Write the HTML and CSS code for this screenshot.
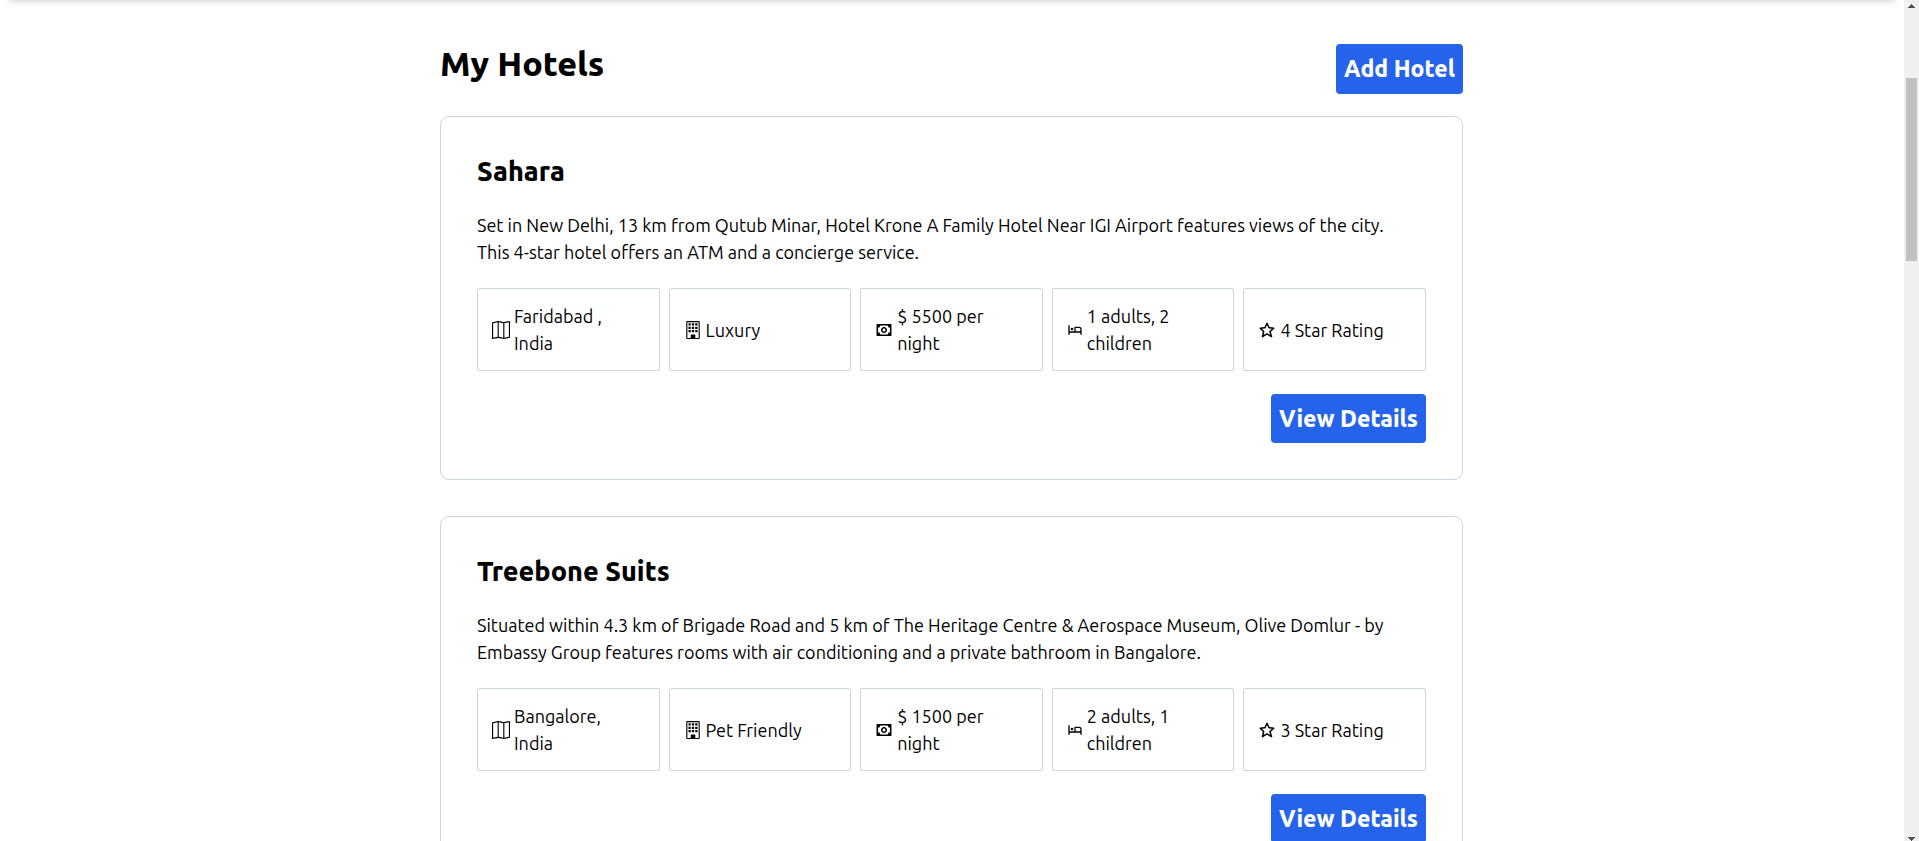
FILE: index.html
```html
<!DOCTYPE html>
<html lang="en">
<head>
<meta charset="utf-8">
<title>My Hotels</title>
<link rel="stylesheet" href="styles.css">
</head>
<body>
<svg class="sprite" aria-hidden="true">
  <symbol id="i-map" viewBox="0 0 16 16"><path fill-rule="evenodd" d="M15.817.113A.5.5 0 0 1 16 .5v14a.5.5 0 0 1-.402.49l-5 1a.502.502 0 0 1-.196 0L5.5 15.01l-4.902.98A.5.5 0 0 1 0 15.5v-14a.5.5 0 0 1 .402-.49l5-1a.5.5 0 0 1 .196 0L10.5.99l4.902-.98a.5.5 0 0 1 .415.103M10 1.91l-4-.8v12.98l4 .8zm1 12.98 4-.8V1.11l-4 .8zm-6-.8V1.11l-4 .8v12.98z"/></symbol>
  <symbol id="i-building" viewBox="0 0 16 16"><path d="M4 2h2v2H4zM7 2h2v2H7zM10 2h2v2h-2zM4 5h2v2H4zM7 5h2v2H7zM10 5h2v2h-2zM4 8h2v2H4zM7 8h2v2H7zM10 8h2v2h-2z"/><path d="M2 1a1 1 0 0 1 1-1h10a1 1 0 0 1 1 1v14a1 1 0 0 1-1 1H3a1 1 0 0 1-1-1zm11 0H3v14h3v-2.500a.5.5 0 0 1 .5-.5h3a.5.5 0 0 1 .5.5V15h3z"/></symbol>
  <symbol id="i-money" viewBox="0 0 24 24"><path d="M12 8c-2.206 0-4 1.794-4 4s1.794 4 4 4 4-1.794 4-4-1.794-4-4-4zm0 6c-1.103 0-2-.897-2-2s.897-2 2-2 2 .897 2 2-.897 2-2 2z"/><path d="M21 4H3a1 1 0 0 0-1 1v14a1 1 0 0 0 1 1h18a1 1 0 0 0 1-1V5a1 1 0 0 0-1-1zm-1 11a3 3 0 0 0-3 3H7a3 3 0 0 0-3-3V9a3 3 0 0 0 3-3h10a3 3 0 0 0 3 3v6z"/></symbol>
  <symbol id="i-hotel" viewBox="0 0 24 24"><path d="M18.205 7H12a1 1 0 0 0-1 1v6H4V5H2v14h2v-3h16v3h2v-8.205A3.800 3.800 0 0 0 18.205 7zM20 14h-7V9h5.205A1.797 1.797 0 0 1 20 10.795V14z"/><circle cx="7.500" cy="10.500" r="2"/></symbol>
  <symbol id="i-star" viewBox="0 0 24 24"><path d="m6.516 14.323-1.490 6.452a.998.998 0 0 0 1.529 1.057L12 18.202l5.445 3.630a1.001 1.001 0 0 0 1.517-1.106l-1.829-6.400 4.536-4.082a1 1 0 0 0-.59-1.740l-5.701-.454-2.467-5.461a.998.998 0 0 0-1.822 0L8.622 8.050l-5.701.453a1 1 0 0 0-.619 1.713l4.214 4.107zm2.853-4.326a.998.998 0 0 0 .832-.586L12 5.430l1.799 3.981a.998.998 0 0 0 .832.586l3.972.315-3.271 2.944c-.284.256-.397.650-.293 1.018l1.253 4.385-3.736-2.491a.995.995 0 0 0-1.109 0l-3.904 2.603 1.050-4.546a1 1 0 0 0-.276-.940l-3.038-2.962 4.090-.326z"/></symbol>
</svg>
<div class="viewport">
  <div class="page">
    <div class="topbar"></div>
    <main class="hotels">
      <div class="heading">
        <h1>My Hotels</h1>
        <a class="btn" href="#add">Add Hotel</a>
      </div>
      <article class="card">
        <h2>Sahara</h2>
        <p class="desc">Set in New Delhi, 13 km from Qutub Minar, Hotel Krone A Family Hotel Near IGI Airport features views of the city. This 4-star hotel offers an ATM and a concierge service.</p>
        <ul class="facts">
          <li><svg class="icon"><use href="#i-map"/></svg><span>Faridabad , India</span></li>
          <li><svg class="icon"><use href="#i-building"/></svg><span>Luxury</span></li>
          <li><svg class="icon"><use href="#i-money"/></svg><span>$ 5500 per night</span></li>
          <li><svg class="icon icon-sm"><use href="#i-hotel"/></svg><span>1 adults, 2 children</span></li>
          <li><svg class="icon"><use href="#i-star"/></svg><span>4 Star Rating</span></li>
        </ul>
        <a class="btn" href="#sahara">View Details</a>
      </article>
      <article class="card">
        <h2>Treebone Suits</h2>
        <p class="desc">Situated within 4.3 km of Brigade Road and 5 km of The Heritage Centre &amp; Aerospace Museum, Olive Domlur - by Embassy Group features rooms with air conditioning and a private bathroom in Bangalore.</p>
        <ul class="facts">
          <li><svg class="icon"><use href="#i-map"/></svg><span>Bangalore, India</span></li>
          <li><svg class="icon"><use href="#i-building"/></svg><span>Pet Friendly</span></li>
          <li><svg class="icon"><use href="#i-money"/></svg><span>$ 1500 per night</span></li>
          <li><svg class="icon icon-sm"><use href="#i-hotel"/></svg><span>2 adults, 1 children</span></li>
          <li><svg class="icon"><use href="#i-star"/></svg><span>3 Star Rating</span></li>
        </ul>
        <a class="btn" href="#treebone">View Details</a>
      </article>
    </main>
  </div>
  <div class="scrollbar" aria-hidden="true">
    <svg class="arrow" viewBox="0 0 7 4" shape-rendering="crispEdges"><path d="M3 0h1v1h1v1h1v1h1v1H0V3h1V2h1V1h1z"/></svg>
    <div class="thumb"></div>
    <svg class="arrow" viewBox="0 0 7 4" shape-rendering="crispEdges"><path d="M0 0h7v1H6v1H5v1H4v1H3V3H2V2H1V1H0z"/></svg>
  </div>
</div>
</body>
</html>
```
FILE: styles.css
```css
* { box-sizing: border-box; }
body {
  margin: 0;
  background: #fff;
  color: #000;
  font: 18px/27px Ubuntu, "Noto Sans", sans-serif;
}
h1, h2, p, ul { margin: 0; padding: 0; }
.sprite { display: none; }
.viewport { display: flex; height: 100vh; overflow: hidden; }
.page { flex: 1; min-width: 0; padding-right: 1px; }
.topbar {
  height: 20px;
  margin: -20px 8px 0 9px;
  background: #fff;
  box-shadow: 0 1px 7px rgba(0, 0, 0, 0.2);
}
.hotels {
  max-width: 1023px;
  margin: 0 auto;
  padding-top: 44px;
}
.heading {
  display: flex;
  justify-content: space-between;
  align-items: flex-start;
  margin-bottom: 22px;
}
h1, h2, .btn { font-weight: 800; }
h1 { font-size: 34px; line-height: 38px; }
h2 { font-size: 27px; line-height: 37px; }
.btn {
  padding: 9px 8px;
  border-radius: 4px;
  background: #2563eb;
  color: #fff;
  font-size: 23px;
  line-height: 32px;
  text-decoration: none;
}
.card {
  display: flex;
  flex-direction: column;
  gap: 22px;
  margin-bottom: 36px;
  padding: 36px;
  border: 1px solid #cbd5e1;
  border-radius: 9px;
}
.card .btn { align-self: flex-end; line-height: 31px; }
.desc { padding-right: 18px; }
.facts {
  display: grid;
  grid-template-columns: repeat(5, 1fr);
  gap: 9px;
  margin-bottom: 1px;
  list-style: none;
}
.facts li {
  display: flex;
  align-items: center;
  gap: 4px;
  padding: 14px 22px 13px 14px;
  border: 1px solid #cbd5e1;
  border-radius: 2px;
}
.icon { flex: none; width: 18px; height: 18px; }
.icon-sm { width: 16px; }
.scrollbar {
  display: flex;
  flex-direction: column;
  align-items: center;
  width: 15px;
  padding: 4px 0 0;
  background: #f0f0f0;
}
.arrow { flex: none; width: 7px; height: 4px; fill: #505050; }
.thumb {
  width: 11px;
  height: 183px;
  margin: 70px 0 auto;
  background: #c1c1c1;
}
```
